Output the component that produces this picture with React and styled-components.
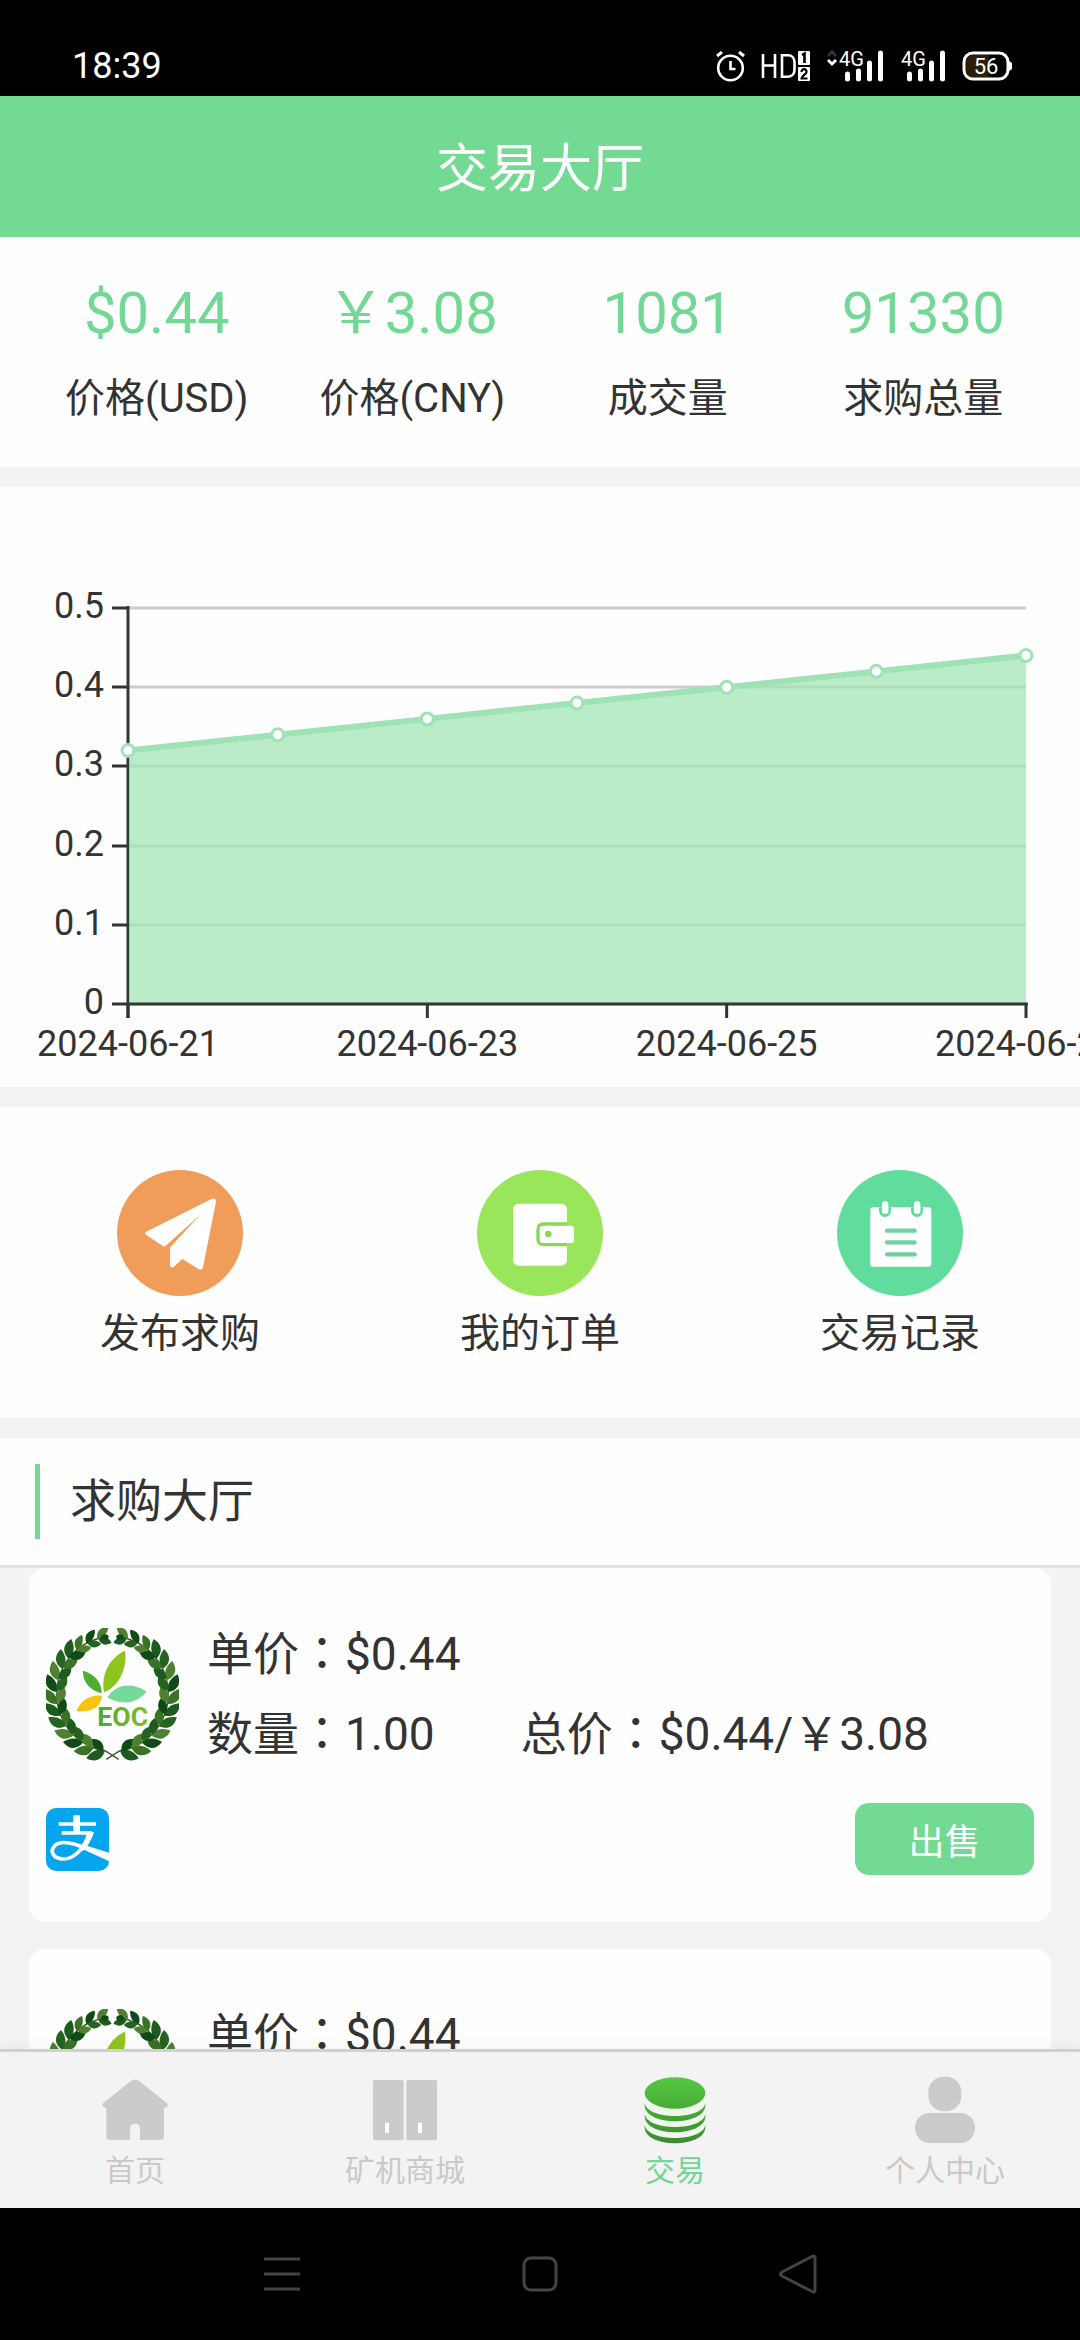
import React from "react";
import styled, { createGlobalStyle } from "styled-components";

const GlobalStyle = createGlobalStyle`
*{
    box-sizing:border-box;
}
body{
    margin:0;
    background:#f3f3f3;
    color:#333;
    font-family:Roboto, "Noto Sans CJK SC", sans-serif;
}
button{
    font-family:inherit;
    border:none;
    padding:0;
    background:none;
    cursor:pointer;
}
svg{
    display:block;
}
`;

const Screen = styled.div`
height:100vh;
display:flex;
flex-direction:column;
overflow:hidden;
`;

const StatusBar = styled.div`
flex:none;
height:96px;
padding:38px 68px 0 72px;
display:flex;
align-items:flex-start;
justify-content:space-between;
background:#000;
color:#fff;
`;

const Clock = styled.time`
font-size:36px;
line-height:56px;
`;

const StatusIcons = styled.div`
display:flex;
align-items:center;
gap:16px;
height:56px;
`;

const Header = styled.header`
flex:none;
height:141px;
padding-top:6px;
display:flex;
align-items:center;
justify-content:center;
background:#73da93;
color:#fff;
`;

const HeaderTitle = styled.h1`
margin:0;
font-size:52px;
font-weight:400;
line-height:78px;
`;

const Content = styled.main`
flex:1;
min-height:0;
overflow:hidden;
display:flex;
flex-direction:column;
`;

const Section = styled.section`
flex:none;
background:#fefefe;
margin-bottom:20px;
`;

const Stats = styled(Section)`
display:grid;
grid-template-columns:repeat(4, 1fr);
padding:40px 29px 36px;
`;

const Stat = styled.div`
display:flex;
flex-direction:column;
align-items:center;
gap:18px;
white-space:nowrap;
`;

const StatValue = styled.span`
font-size:58px;
line-height:72px;
color:#73d796;
`;

const StatLabel = styled.span`
font-size:40px;
line-height:64px;
`;

const ChartBox = styled(Section)`
svg{
    width:100%;
    height:auto;
}
`;

const Actions = styled(Section)`
display:grid;
grid-template-columns:repeat(3, 1fr);
padding:63px 0 52px;
`;

const Action = styled.button`
display:flex;
flex-direction:column;
align-items:center;
gap:6px;
color:#333;
font-size:40px;
line-height:64px;
svg{
    width:126px;
    height:126px;
}
`;

const ListTitle = styled.div`
flex:none;
display:flex;
align-items:center;
padding:26px 35px;
background:#fefefe;
border-bottom:3px solid #e2e2e2;
`;

const ListName = styled.h2`
margin:0;
padding-left:30px;
border-left:5px solid #73d796;
font-size:46px;
font-weight:400;
line-height:75px;
`;

const Orders = styled.ul`
flex:none;
list-style:none;
margin:0;
padding:0 29px;
display:flex;
flex-direction:column;
gap:27px;
`;

const Order = styled.li`
background:#fefefe;
border-radius:16px;
padding:46px 17px 47px;
`;

const OrderInfo = styled.div`
display:flex;
align-items:center;
gap:28px;
`;

const OrderLines = styled.div`
flex:1;
font-size:46px;
line-height:80px;
white-space:nowrap;
`;

const OrderLine = styled.div`
display:flex;
gap:86px;
`;

const Colon = styled.span`
font-family:"Noto Sans CJK TC", sans-serif;
line-height:1;
`;

const OrderFoot = styled.div`
display:flex;
align-items:center;
justify-content:space-between;
margin-top:29px;
`;

const SellButton = styled.button`
width:179px;
height:72px;
border-radius:14px;
background:#73da93;
color:#fff;
font-size:36px;
`;

const TabBar = styled.nav`
flex:none;
position:relative;
display:grid;
grid-template-columns:repeat(4, 1fr);
padding:24px 0 15px;
background:#f3f3f3;
border-top:3px solid #d0d0d0;
box-shadow:0 -4px 12px rgba(0,0,0,0.04);
`;

const Tab = styled.a`
display:flex;
flex-direction:column;
align-items:center;
gap:5px;
color:${({$active}) => $active ? '#72d695' : '#c9c9c9'};
font-size:30px;
line-height:44px;
text-decoration:none;
`;

const SystemBar = styled.div`
flex:none;
height:132px;
padding:0 153px;
display:grid;
grid-template-columns:repeat(3, 1fr);
align-items:center;
justify-items:center;
background:#000;
`;

const SystemButton = styled.button`
width:60px;
height:60px;
display:flex;
align-items:center;
justify-content:center;
`;

/* status bar icons */

const AlarmIcon = () => (
    <svg width="29" height="31" viewBox="0 0 29 31" fill="none" stroke="#fff" strokeWidth="2.6">
        <circle cx="14.500" cy="17" r="12.300"/>
        <path d="M14.500 10v8h5"/>
        <path d="M1 5l5-4M28 5l-5-4" strokeWidth="3"/>
    </svg>
);

const HdIcon = () => (
    <svg width="50" height="32" viewBox="0 0 50 32">
        <path d="M2 4v24M14 4v24M2 15.500h12M21 5.300h6c4 0 6.500 3 6.500 7v7.400c0 4-2.500 7-6.500 7h-6z" fill="none" stroke="#fff" strokeWidth="2.6"/>
        <rect x="37" y="1" width="12" height="14" rx="1" fill="#fff"/>
        <rect x="37" y="17" width="12" height="14" rx="1" fill="#fff"/>
        <path d="M41 5l2.500-1.500V13" fill="none" stroke="#000" strokeWidth="2.6"/>
        <path d="M40.500 22c0-4 5.500-3.500 5 0c0 2-5 4-5 6.500h6" fill="none" stroke="#000" strokeWidth="2.2"/>
    </svg>
);

const SignalIcon = ({arrows}) => (
    <svg width={arrows ? 57 : 46} height="32" viewBox={arrows ? "-12 0 57 32" : "-1 0 46 32"}>
        {arrows && <path d="M-11 6l4-4 4 4" fill="none" stroke="#333" strokeWidth="3"/>}
        {arrows && <path d="M-11 10l4 4 4-4" fill="none" stroke="#fff" strokeWidth="3"/>}
        <text x="0" y="16" fontSize="20" fill="#fff" fontFamily='"Liberation Sans Narrow", Roboto, sans-serif'>4G</text>
        <path d="M8.500 24v5M19.500 21v8M30.500 13v16M41.500 3v26" stroke="#fff" strokeWidth="5" strokeLinecap="round"/>
    </svg>
);

const BatteryIcon = () => (
    <svg width="50" height="30" viewBox="0 0 50 30">
        <rect x="2" y="2" width="44" height="26" rx="9" fill="#000" stroke="#fff" strokeWidth="3"/>
        <path d="M11 4h16v22H11c-5 0-7-3-7-7v-8c0-4 2-7 7-7z" fill="#2a1e06"/>
        <path d="M47 10l3 2v6l-3 2z" fill="#fff"/>
        <text x="24" y="23" fontSize="22" fill="#fff" textAnchor="middle">56</text>
    </svg>
);

/* price chart */

const prices = [
    { date: '2024-06-21', value: 0.32 },
    { date: '2024-06-22', value: 0.34 },
    { date: '2024-06-23', value: 0.36 },
    { date: '2024-06-24', value: 0.38 },
    { date: '2024-06-25', value: 0.4 },
    { date: '2024-06-26', value: 0.42 },
    { date: '2024-06-27', value: 0.44 },
];

const axis = { left: 128, right: 1026, top: 121, bottom: 517 };
const px = i => axis.left + (axis.right - axis.left) * i / (prices.length - 1);
const py = v => axis.bottom - (axis.bottom - axis.top) * v / 0.5;

const PriceChart = () => {
    const line = prices.map((p, i) => `${px(i)},${py(p.value)}`).join(' ');
    return(
        <svg viewBox="0 0 1080 600" role="img" fontSize="36" fill="#333">
            {[0.5, 0.4, 0.3, 0.2, 0.1, 0].map(v => (
                <g key={v}>
                    <path d={`M${axis.left} ${Math.round(py(v))}H${axis.right}`} stroke="#ccc" strokeWidth="3"/>
                    <path d={`M112 ${Math.round(py(v))}H${axis.left}`} stroke="#333" strokeWidth="3"/>
                    <text x="104" y={Math.round(py(v)) + 10} textAnchor="end">{v}</text>
                </g>
            ))}
            <path d={`M${axis.left} ${axis.top - 2}V${axis.bottom + 14}`} stroke="#333" strokeWidth="3"/>
            <polygon
                points={`${axis.left},${axis.bottom} ${line} ${axis.right},${axis.bottom}`}
                fill="#a0e4b5"
                fillOpacity="0.72"
            />
            <path d={`M${axis.left} ${axis.top - 2}V${axis.bottom + 14}`} stroke="#2f3a33" strokeWidth="2"/>
            <path d={`M${axis.left} ${axis.bottom}H${axis.right + 2}`} stroke="#2f3a33" strokeWidth="3"/>
            <polyline points={line} fill="none" stroke="#9fe2b5" strokeWidth="6"/>
            {prices.map((p, i) => (
                <g key={p.date}>
                    <circle cx={px(i)} cy={py(p.value)} r="6" fill="#fff" stroke="#9fe2b5" strokeWidth="3"/>
                    {i % 2 === 0 && <path d={`M${px(i)} ${axis.bottom}v14`} stroke="#333" strokeWidth="3"/>}
                    {i % 2 === 0 && <text x={px(i)} y="569" textAnchor="middle">{p.date}</text>}
                </g>
            ))}
        </svg>
    );
}

/* round action icons */

const PlaneIcon = () => (
    <svg viewBox="21 31 378 378">
        <circle cx="210" cy="220" r="189" fill="#f09d5a"/>
        <path d="M306 117L109 216q-7 4-1 9l50 34q5 3 9-1L271 165L182 261q-2 2-2 6v50q2 10 11 5L217 298l50 31q10 4 12-6L318 126q-1-12-12-9z" fill="#fff"/>
    </svg>
);

const WalletIcon = () => (
    <svg viewBox="21 31 378 378">
        <circle cx="210" cy="220" r="189" fill="#99e65b"/>
        <rect x="129" y="132" width="162" height="186" rx="16" fill="#fff"/>
        <path d="M300 188h-78q-23 0-23 22v28q0 22 23 22h78z" fill="#8bd653"/>
        <path d="M291 188h30v72h-30z" fill="#99e65b"/>
        <rect x="209" y="198" width="103" height="52" rx="10" fill="#fff"/>
        <circle cx="235" cy="223" r="10" fill="#8bd653"/>
    </svg>
);

const NotesIcon = () => (
    <svg viewBox="21 31 378 378">
        <circle cx="210" cy="220" r="189" fill="#60dc9c"/>
        <rect x="121" y="143" width="183" height="178" rx="8" fill="#fff"/>
        <path d="M147 143v11a18 18 0 0 0 36 0v-11zM243 143v11a18 18 0 0 0 36 0v-11z" fill="#60dc9c"/>
        <rect x="156" y="125" width="19" height="38" rx="9" fill="#fff"/>
        <rect x="252" y="125" width="19" height="38" rx="9" fill="#fff"/>
        <path d="M171 213h83M171 248h83M171 284h83" stroke="#6dd3a0" strokeWidth="13" strokeLinecap="round"/>
    </svg>
);

/* coin logo: two laurel branches built leaf by leaf */

const greens = ['#1d5c1f', '#3a7226', '#0f4a17', '#4f8030', '#256320'];

const Branch = () => (
    <g>
        <path d="M218 394L177 368A168 172 0 0 1 180 27" fill="none" stroke="#35561f" strokeWidth="4"/>
        {Array.from({ length: 14 }, (_, i) => {
            const t = (8 + i * 12) * Math.PI / 180;
            const x = 200 - 168 * Math.sin(t);
            const y = 198 + 172 * Math.cos(t);
            const dir = -90 + t * 180 / Math.PI;
            const size = i > 10 ? 0.8 : 1;
            return(
                <g key={i} transform={`translate(${x} ${y}) rotate(${dir}) scale(${size})`}>
                    <path d="M0 0C-30 -4 -40 -26 -30 -52C-8 -42 6 -22 0 0" fill={greens[i % 5]}/>
                    <path d="M0 -4C-6 -24 6 -42 28 -48C36 -24 26 -6 0 -4" fill={greens[(i + 2) % 5]}/>
                </g>
            );
        })}
        <ellipse cx="177" cy="27" rx="11" ry="8" fill="#0f4a17"/>
    </g>
);

const CoinLogo = () => (
    <svg width="133" height="133" viewBox="0 0 399 399">
        <defs>
            <linearGradient id="eoc" x1="0" y1="0" x2="1" y2="0">
                <stop offset="0" stopColor="#48a83a"/>
                <stop offset="1" stopColor="#86bd27"/>
            </linearGradient>
        </defs>
        <Branch/>
        <g transform="translate(399 0) scale(-1 1)"><Branch/></g>
        <path d="M174 193C164 138 192 88 237 68C244 118 222 173 174 193z" fill="#8fc41e"/>
        <path d="M167 196C122 183 110 153 111 128C147 138 167 163 167 196z" fill="#4fae32"/>
        <path d="M184 208C207 173 252 158 302 191C272 228 222 233 184 208z" fill="#76d99a"/>
        <path d="M168 203C164 238 137 253 91 250C102 218 132 198 168 203z" fill="#f6c40c"/>
        <text x="154" y="294" fontSize="80" fontWeight="700" fill="url(#eoc)">EOC</text>
    </svg>
);

const AlipayIcon = () => (
    <svg width="63" height="63" viewBox="0 0 189 189" fill="none" stroke="#fff">
        <rect width="189" height="189" rx="30" fill="#06a6ee" stroke="none"/>
        <path d="M38 48H150M47 75H138" strokeWidth="10"/>
        <path d="M92 22V74" strokeWidth="20"/>
        <path d="M132 72C122 108 92 152 54 153C18 153 12 128 26 113C46 94 86 106 122 122L189 150" strokeWidth="11"/>
        <path d="M118 112L189 134V160L98 118z" fill="#fff" stroke="none"/>
        <path d="M124 72H144C138 92 128 112 112 128L98 122C112 106 120 90 124 72z" fill="#fff" stroke="none"/>
    </svg>
);

/* tab bar icons */

const HomeIcon = () => (
    <svg width="68" height="68" viewBox="123 75 204 204" fill="#cbcbcb">
        <path d="M213 90q12-9 25 0L321 157q8 12-9 13v84q0 13-13 13H240v-34q-1-15-15-15t-15 15v34H152q-13 0-13-13v-84q-17-1-10-13z"/>
    </svg>
);

const MallIcon = () => (
    <svg width="68" height="68" viewBox="933 75 204 204">
        <rect x="939" y="87" width="92" height="181" rx="6" fill="#cbcbcb"/>
        <rect x="1039" y="87" width="92" height="181" rx="6" fill="#cbcbcb"/>
        <path d="M975 215h12v31h-12zM1074 215h12v31h-12z" fill="#fff"/>
    </svg>
);

const CoinsIcon = () => (
    <svg width="68" height="68" viewBox="123 75 204 204">
        <defs>
            <linearGradient id="coins" gradientUnits="userSpaceOnUse" x1="0" y1="80" x2="0" y2="276">
                <stop offset="0" stopColor="#54c840"/>
                <stop offset="1" stopColor="#3d8a32"/>
            </linearGradient>
        </defs>
        <path d="M134 145v80C150 270 300 270 316 225v-80z" fill="#eef8ea"/>
        <ellipse cx="225" cy="126" rx="91" ry="47" fill="url(#coins)"/>
        {[0, 33, 66].map(dy => (
            <path
                key={dy}
                d={`M134 ${156 + dy}C142 ${208 + dy} 308 ${208 + dy} 316 ${156 + dy}V${164 + dy}C312 ${226 + dy} 138 ${226 + dy} 134 ${164 + dy}z`}
                fill="url(#coins)"
            />
        ))}
    </svg>
);

const UserIcon = () => (
    <svg width="68" height="68" viewBox="933 75 204 204" fill="#cbcbcb">
        <rect x="985" y="77" width="99" height="104" rx="46"/>
        <rect x="945" y="186" width="180" height="90" rx="44"/>
    </svg>
);

const stats = [
    { value: '$0.44', label: '价格(USD)' },
    { value: '￥3.08', label: '价格(CNY)' },
    { value: '1081', label: '成交量' },
    { value: '91330', label: '求购总量' },
];

const orders = [
    { id: 1, price: '$0.44', count: '1.00', total: '$0.44/￥3.08' },
    { id: 2, price: '$0.44', count: '1.00', total: '$0.44/￥3.08' },
];

const Field = ({name, value}) => (
    <span>{name}<Colon>：</Colon>{value}</span>
);

const App = () => {
    return(
        <Screen>
            <GlobalStyle/>
            <StatusBar>
                <Clock>18:39</Clock>
                <StatusIcons>
                    <AlarmIcon/>
                    <HdIcon/>
                    <SignalIcon arrows/>
                    <SignalIcon/>
                    <BatteryIcon/>
                </StatusIcons>
            </StatusBar>
            <Header>
                <HeaderTitle>交易大厅</HeaderTitle>
            </Header>
            <Content>
                <Stats>
                    {stats.map(({value, label}) => (
                        <Stat key={label}>
                            <StatValue>{value}</StatValue>
                            <StatLabel>{label}</StatLabel>
                        </Stat>
                    ))}
                </Stats>
                <ChartBox>
                    <PriceChart/>
                </ChartBox>
                <Actions>
                    <Action><PlaneIcon/>发布求购</Action>
                    <Action><WalletIcon/>我的订单</Action>
                    <Action><NotesIcon/>交易记录</Action>
                </Actions>
                <ListTitle>
                    <ListName>求购大厅</ListName>
                </ListTitle>
                <Orders>
                    {orders.map(({id, price, count, total}) => (
                        <Order key={id}>
                            <OrderInfo>
                                <CoinLogo/>
                                <OrderLines>
                                    <OrderLine><Field name='单价' value={price}/></OrderLine>
                                    <OrderLine>
                                        <Field name='数量' value={count}/>
                                        <Field name='总价' value={total}/>
                                    </OrderLine>
                                </OrderLines>
                            </OrderInfo>
                            <OrderFoot>
                                <AlipayIcon/>
                                <SellButton>出售</SellButton>
                            </OrderFoot>
                        </Order>
                    ))}
                </Orders>
            </Content>
            <TabBar>
                <Tab href='#home'><HomeIcon/>首页</Tab>
                <Tab href='#mall'><MallIcon/>矿机商城</Tab>
                <Tab href='#trade' $active><CoinsIcon/>交易</Tab>
                <Tab href='#me'><UserIcon/>个人中心</Tab>
            </TabBar>
            <SystemBar>
                <SystemButton aria-label='menu'>
                    <svg width="36" height="36" stroke="#444" strokeWidth="3">
                        <path d="M0 3H36M0 18H36M0 33H36"/>
                    </svg>
                </SystemButton>
                <SystemButton aria-label='home'>
                    <svg width="36" height="36" fill="none" stroke="#444" strokeWidth="3">
                        <rect x="2" y="2" width="32" height="32" rx="7"/>
                    </svg>
                </SystemButton>
                <SystemButton aria-label='back'>
                    <svg width="40" height="42" fill="none" stroke="#444" strokeWidth="3" strokeLinejoin="round">
                        <path d="M34 3.500Q37 2 37 5V37Q37 40 34 38.500L4 23Q1 21 4 19z"/>
                    </svg>
                </SystemButton>
            </SystemBar>
        </Screen>
    );
}


export default App;
